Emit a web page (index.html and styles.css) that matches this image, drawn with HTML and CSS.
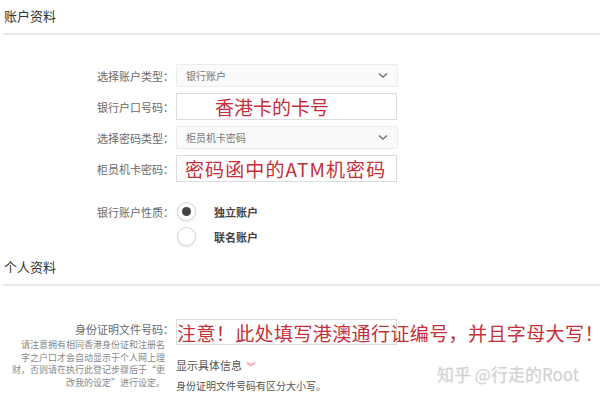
FILE: index.html
```html
<!DOCTYPE html>
<html lang="zh-CN">
<head>
    <meta charset="UTF-8">
    <meta name="viewport" content="width=device-width, initial-scale=1.0">
    <title>账户资料</title>
    <link rel="stylesheet" href="styles.css">
</head>
<body>
    <!-- Account section -->
    <div class="section-title">账户资料</div>

    <div class="form">
        <div class="row">
            <div class="label">选择账户类型：</div>
            <div class="select">
                <span>银行账户</span>
                <svg class="chevron" width="10" height="7" viewBox="0 0 10 7"><path d="M1 1.5 L5 5 L9 1.5" fill="none" stroke="#777" stroke-width="1.6"/></svg>
            </div>
        </div>
        <div class="row">
            <div class="label">银行户口号码：</div>
            <div class="input tall"><span class="red note-card">香港卡的卡号</span></div>
        </div>
        <div class="row">
            <div class="label">选择密码类型：</div>
            <div class="select">
                <span>柜员机卡密码</span>
                <svg class="chevron" width="10" height="7" viewBox="0 0 10 7"><path d="M1 1.5 L5 5 L9 1.5" fill="none" stroke="#777" stroke-width="1.6"/></svg>
            </div>
        </div>
        <div class="row">
            <div class="label">柜员机卡密码：</div>
            <div class="input tall"><span class="red wide">密码函中的ATM机密码</span></div>
        </div>

        <div class="radio-group">
            <div class="label">银行账户性质：</div>
            <div class="radios">
                <div class="radio-item">
                    <span class="radio checked"></span>
                    <span class="radio-text">独立账户</span>
                </div>
                <div class="radio-item">
                    <span class="radio"></span>
                    <span class="radio-text">联名账户</span>
                </div>
            </div>
        </div>
    </div>

    <!-- Personal section -->
    <div class="section-title second">个人资料</div>

    <div class="id-block">
        <div class="id-left">
            <div class="label">身份证明文件号码：</div>
            <div class="help">请注意拥有相同香港身份证和注册名<br>字之户口才会自动显示于个人网上理<br>财，否则请在执行此登记步骤后于“更<br>改我的设定”进行设定。</div>
        </div>
        <div class="id-right">
            <div class="input id-input"><span class="red nowrap">注意！此处填写港澳通行证编号，并且字母大写！</span></div>
            <div class="show-more">显示具体信息 <span class="arrows">︾</span></div>
            <div class="case-note">身份证明文件号码有区分大小写。</div>
        </div>
    </div>

    <div class="watermark">知乎 @行走的Root</div>
</body>
</html>
```

FILE: styles.css
```css
body {
    margin: 0;
    font-family: "Noto Sans CJK SC", "Noto Sans", sans-serif;
    background: #fff;
    color: #333;
    position: relative;
    width: 600px;
}

/* Section headers */
.section-title {
    height: 33px;
    line-height: 31px;
    padding-left: 4px;
    font-size: 13px;
    color: #333;
    border-bottom: 2px solid #e9e9e9;
    margin-left: 3px;
    text-indent: -3px;
}

.section-title.second {
    margin-top: 5px;
}

/* Form rows */
.form {
    padding-top: 29px;
}

.row {
    display: flex;
    align-items: center;
    margin-bottom: 6px;
}

.label {
    width: 174px;
    flex-shrink: 0;
    text-align: right;
    font-size: 11px;
    color: #6a6a6a;
    margin-right: 2px;
}

.select {
    width: 222px;
    height: 23px;
    box-sizing: border-box;
    border: 1px solid #ececec;
    border-radius: 2px;
    background: #fafafa;
    display: flex;
    align-items: center;
    justify-content: space-between;
    padding: 0 9px;
    font-size: 10px;
    color: #777;
}

.input {
    width: 221px;
    box-sizing: border-box;
    border: 1px solid #dcdcdc;
    background: #fff;
    display: flex;
    align-items: center;
}

.input.tall {
    height: 27px;
    padding-left: 8px;
}

.red {
    color: #c5303a;
    font-size: 19px;
    line-height: 1;
}

.red.wide {
    letter-spacing: 1.1px;
}

.note-card {
    margin-left: 30px;
}

/* Radio buttons */
.radio-group {
    display: flex;
    margin-top: 20px;
}

.radio-group .label {
    line-height: 20px;
}

.radios {
    display: flex;
    flex-direction: column;
    gap: 6px;
}

.radio-item {
    display: flex;
    align-items: center;
}

.radio {
    width: 19px;
    height: 19px;
    box-sizing: border-box;
    border-radius: 50%;
    border: 1px solid #d6d6d6;
    background: #fff;
    box-shadow: 0 1px 2px rgba(0, 0, 0, 0.1);
    position: relative;
    margin-left: 1px;
}

.radio.checked::after {
    content: "";
    position: absolute;
    left: 4px;
    top: 4px;
    width: 9px;
    height: 9px;
    border-radius: 50%;
    background: #444;
}

.radio-text {
    margin-left: 18px;
    font-size: 11px;
    font-weight: bold;
    color: #444;
}

/* ID block */
.id-block {
    display: flex;
    padding-top: 33px;
}

.id-left {
    width: 174px;
    margin-right: 2px;
}

.id-left .label {
    margin-right: 0;
    line-height: 20px;
}

.help {
    text-align: right;
    font-size: 9px;
    line-height: 12.7px;
    color: #888;
    padding-right: 9px;
}

.id-input {
    height: 26px;
    overflow: visible;
}

.nowrap {
    white-space: nowrap;
    letter-spacing: 0.4px;
}

.show-more {
    margin-top: 12px;
    font-size: 11px;
    color: #555;
}

.arrows {
    color: #e0506a;
    font-size: 9px;
    margin-left: 2px;
}

.case-note {
    margin-top: 5px;
    font-size: 10px;
    color: #555;
}

.watermark {
    position: absolute;
    left: 437px;
    top: 361px;
    font-size: 17px;
    color: #d2d2d2;
    text-shadow: 0 1px 1px rgba(0, 0, 0, 0.08);
}
```
